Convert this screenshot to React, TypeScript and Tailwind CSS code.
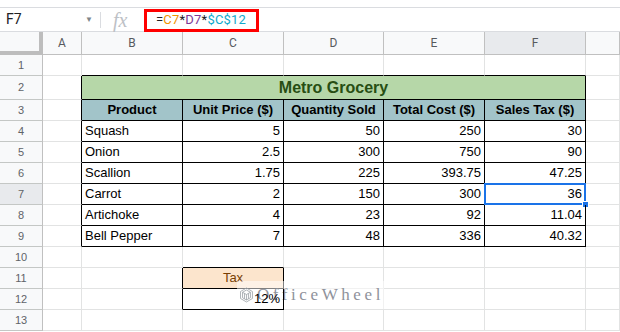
import React from "react";

const data = [
  ["Squash", "5", "50", "250", "30"],
  ["Onion", "2.5", "300", "750", "90"],
  ["Scallion", "1.75", "225", "393.75", "47.25"],
  ["Carrot", "2", "150", "300", "36"],
  ["Artichoke", "4", "23", "92", "11.04"],
  ["Bell Pepper", "7", "48", "336", "40.32"],
];

const letters = ["A", "B", "C", "D", "E", "F", ""];

// right / bottom border colours of one cell
function bc(r: boolean, b: boolean) {
  return `border-r border-b ${r ? "border-r-black" : "border-r-[#e2e3e3]"} ${
    b ? "border-b-black" : "border-b-[#e2e3e3]"
  }`;
}

function RowHead({ n, active }: { n: number; active?: boolean }) {
  return (
    <div
      className={`flex items-center justify-center border-r border-b border-r-[#c0c0c0] border-b-[#c4c7c5] text-[11px] text-[#5f6368] ${
        active ? "bg-[#e8eaed]" : "bg-[#f8f9fa]"
      }`}
    >
      {n}
    </div>
  );
}

function Logo() {
  return (
    <svg width="25" height="28" viewBox="0 0 26 30" fill="none" stroke="#9aa0a6" strokeWidth="1.6">
      <path d="M13 1 L25 8 L25 22 L13 29 L1 22 L1 8 Z" />
      <path d="M13 5 L21 9.5 L21 20.5 L13 25 L5 20.5 L5 9.5 Z" />
      <path d="M5 9.5 L13 14 L21 9.5 M13 14 L13 25" />
      <path d="M9 12 L9 22.5 M17 12 L17 22.5" />
    </svg>
  );
}

export default function App() {
  return (
    <div className="relative h-[332px] w-[620px] overflow-hidden bg-white font-['Liberation_Sans',Arial,sans-serif] text-[13px] text-black">
      {/* formula bar */}
      <div className="pt-[7px]">
        <div className="flex h-[25px] items-center border-y border-[#dadce0]">
          <div className="flex w-[100px] items-center justify-between pl-[6px] pr-[7px] font-['Roboto',sans-serif] text-[14px] text-[#202124]">
            <span>F7</span>
            <span className="text-[8px] text-[#80868b]">▼</span>
          </div>
          <div className="h-[16px] w-px bg-[#dadce0]" />
          <div className="w-[44px] pl-[12px] font-['Liberation_Serif',serif] text-[20px] italic leading-none text-[#bdc1c6]">
            fx
          </div>
          <div className="pl-[11px] font-['Roboto',sans-serif] text-[13px] tracking-[0.2px]">
            <span className="text-[#202124]">=</span>
            <span className="text-[#f09300]">C7</span>
            <span className="text-[#202124]">*</span>
            <span className="text-[#7e3794]">D7</span>
            <span className="text-[#202124]">*</span>
            <span className="text-[#11a9cc]">$C$12</span>
          </div>
        </div>
      </div>

      {/* sheet grid */}
      <div className="grid grid-cols-[43px_39px_101px_101px_100px_101px_101px_34px] grid-rows-[23px_21px_24px_repeat(11,21px)]">
        {/* column headers */}
        <div className="border-r-4 border-b-4 border-[#bdbdbd] bg-[#f8f9fa]" />
        {letters.map((l, i) => (
          <div
            key={i}
            className={`flex items-center justify-center border-r border-b border-[#c0c0c0] font-['Roboto',sans-serif] text-[12px] text-[#575a5e] ${
              l === "F" ? "bg-[#e8eaed]" : "bg-[#f8f9fa]"
            }`}
          >
            {l}
          </div>
        ))}

        {/* row 1 */}
        <RowHead n={1} />
        <div className={bc(false, false)} />
        <div className={bc(false, true)} />
        <div className={bc(false, true)} />
        <div className={bc(false, true)} />
        <div className={bc(false, true)} />
        <div className={bc(false, true)} />
        <div className={bc(false, false)} />

        {/* row 2: title */}
        <RowHead n={2} />
        <div className={bc(true, false)} />
        <div className={`col-span-5 flex items-center justify-center bg-[#b6d7a8] text-[16px] font-bold text-[#274e13] ${bc(true, true)}`}>
          Metro Grocery
        </div>
        <div className={bc(false, false)} />

        {/* row 3: headers */}
        <RowHead n={3} />
        <div className={bc(true, false)} />
        {["Product", "Unit Price ($)", "Quantity Sold", "Total Cost ($)", "Sales Tax ($)"].map((h) => (
          <div key={h} className={`flex items-center justify-center bg-[#a2c4c9] font-bold ${bc(true, true)}`}>
            {h}
          </div>
        ))}
        <div className={bc(false, false)} />

        {/* data rows */}
        {data.map((row, ri) => (
          <React.Fragment key={ri}>
            <RowHead n={ri + 4} active={ri === 3} />
            <div className={bc(true, false)} />
            {row.map((v, ci) => (
              <div
                key={ci}
                className={`relative flex items-center px-[3px] ${ci === 0 ? "justify-start" : "justify-end"} ${bc(true, true)}`}
              >
                {v}
                {ri === 3 && ci === 4 && (
                  <>
                    <div className="absolute -top-px -left-px -right-px -bottom-px border-2 border-[#1a73e8]" />
                    <div className="absolute -right-[4px] -bottom-[4px] h-[7px] w-[7px] border border-white bg-[#1a73e8]" />
                  </>
                )}
              </div>
            ))}
            <div className={bc(false, false)} />
          </React.Fragment>
        ))}

        {/* row 10 */}
        <RowHead n={10} />
        <div className={bc(false, false)} />
        <div className={bc(false, false)} />
        <div className={bc(false, true)} />
        <div className={bc(false, false)} />
        <div className={bc(false, false)} />
        <div className={bc(false, false)} />
        <div className={bc(false, false)} />

        {/* row 11 */}
        <RowHead n={11} />
        <div className={bc(false, false)} />
        <div className={bc(true, false)} />
        <div className={`flex items-center justify-center bg-[#fce5cd] text-[#783f04] ${bc(true, true)}`}>Tax</div>
        <div className={bc(false, false)} />
        <div className={bc(false, false)} />
        <div className={bc(false, false)} />
        <div className={bc(false, false)} />

        {/* row 12 */}
        <RowHead n={12} />
        <div className={bc(false, false)} />
        <div className={bc(true, false)} />
        <div className={`relative z-10 flex items-center justify-end px-[3px] ${bc(true, true)}`}>12%</div>
        <div className={bc(false, false)} />
        <div className={bc(false, false)} />
        <div className={bc(false, false)} />
        <div className={bc(false, false)} />

        {/* row 13 */}
        <RowHead n={13} />
        {letters.map((_, i) => (
          <div key={i} className={bc(false, false)} />
        ))}
      </div>

      {/* annotation: red box around the formula */}
      <div className="absolute left-[144px] top-[9px] h-[23px] w-[115px] border-[3px] border-[#f00]" />

      {/* watermark */}
      <div className="absolute left-[237px] top-[281px] flex h-[28px] w-[147px] items-center gap-[4px] bg-white/50 pl-[3px]">
        <Logo />
        <span className="font-['Liberation_Serif',serif] text-[17px] tracking-[3.6px] text-[#8f929b]">OfficeWheel</span>
      </div>
    </div>
  );
}
